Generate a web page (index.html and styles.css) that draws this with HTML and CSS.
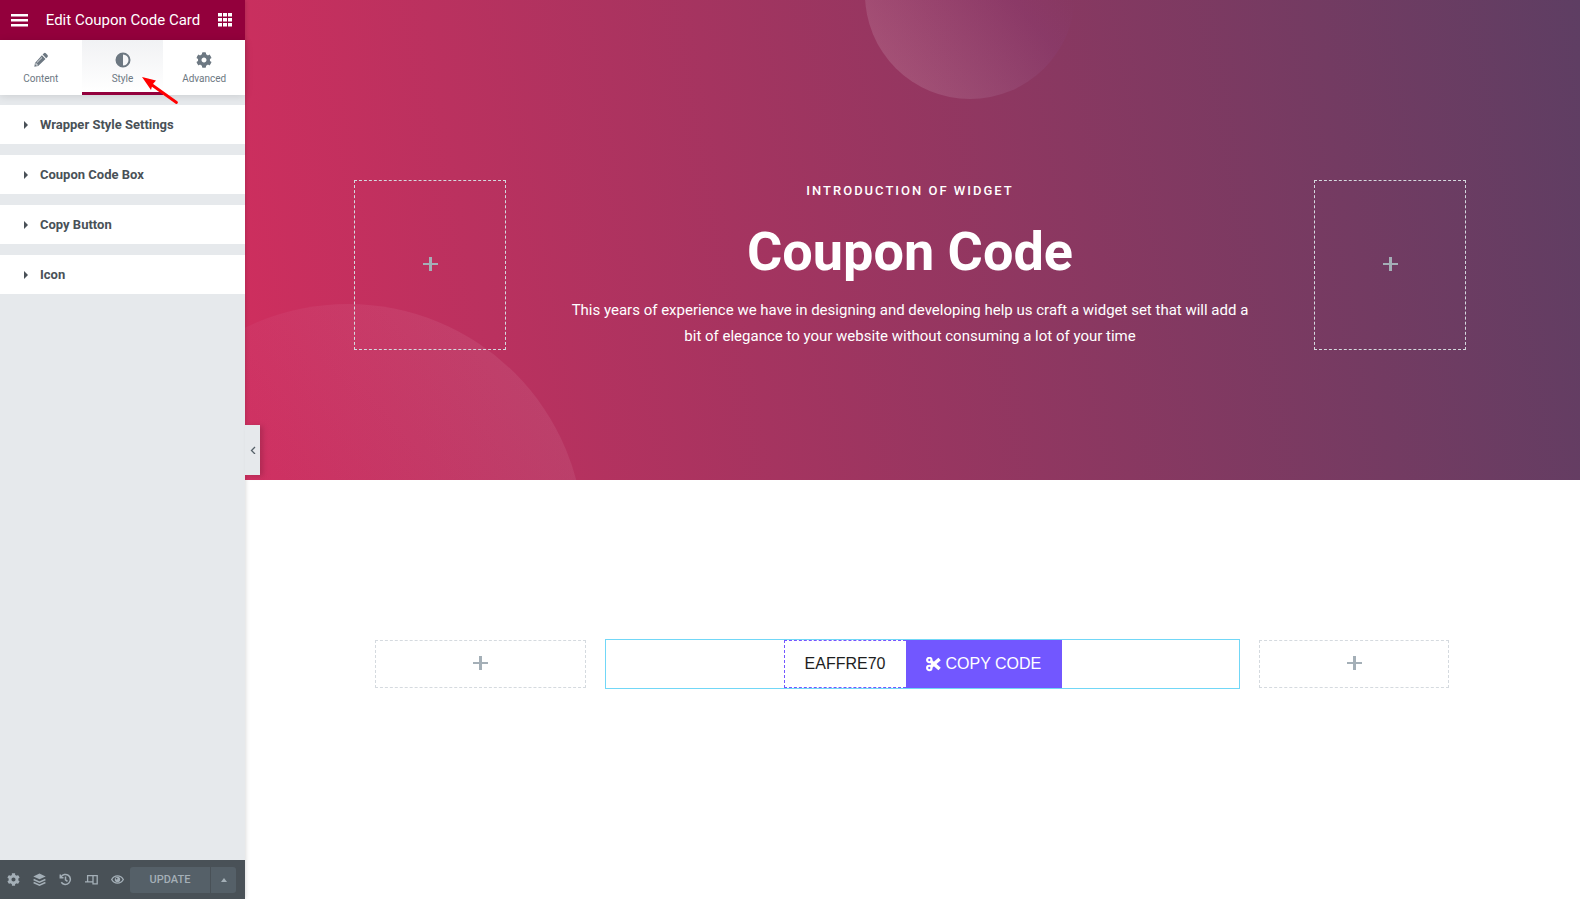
FILE: index.html
```html
<!DOCTYPE html>
<html lang="en">
<head>
  <meta charset="UTF-8">
  <meta name="viewport" content="width=device-width, initial-scale=1.0">
  <title>Edit Coupon Code Card</title>
  <link rel="stylesheet" href="styles.css">
</head>
<body>
  <aside class="panel">
    <header class="panel-header">
      <button class="header-btn" type="button" aria-label="Menu">
        <svg width="17" height="14" viewBox="0 0 17 14"><path d="M0 2.200h17M0 7.200h17M0 12.200h17" stroke="#fff" stroke-width="2.400"/></svg>
      </button>
      <h1 class="panel-title">Edit Coupon Code Card</h1>
      <button class="header-btn" type="button" aria-label="Widgets">
        <svg width="14" height="14" viewBox="0 0 14 14" fill="#fff"><path d="M0 0h4v3.500H0zM5 0h4v3.500H5zM10 0h4v3.500h-4zM0 5h4v3.500H0zM5 5h4v3.500H5zM10 5h4v3.500h-4zM0 10h4v3.500H0zM5 10h4v3.500H5zM10 10h4v3.500h-4z"/></svg>
      </button>
    </header>

    <nav class="tabs">
      <button class="tab" type="button">
        <svg width="16" height="16" viewBox="0 0 16 16" fill="#6d7882"><path d="M10.900 1.300a1.400 1.400 0 0 1 1.900 0l1.700 1.700a1.400 1.400 0 0 1 0 1.900l-1.300 1.300-3.600-3.600zM8.900 3.300l3.600 3.600-7.300 7.200-3.900.7.700-3.900z"/><path d="M9 5.500l-5.100 5.100M3 11v2h2" stroke="#fff" stroke-width=".8" fill="none"/></svg>
        <span>Content</span>
      </button>
      <button class="tab active" type="button">
        <svg width="16" height="16" viewBox="0 0 16 16"><circle cx="8" cy="8" r="6.500" fill="none" stroke="#6d7882" stroke-width="2"/><path d="M8 1.500a6.500 6.500 0 0 0 0 13z" fill="#6d7882"/></svg>
        <span>Style</span>
      </button>
      <button class="tab" type="button">
        <svg width="16" height="16" viewBox="0 0 512 512" fill="#6d7882"><path d="M487.400 315.700l-42.600-24.600c4.300-23.200 4.300-47 0-70.200l42.600-24.600c4.900-2.800 7.100-8.600 5.500-14-11.100-35.600-30-67.800-54.700-94.600-3.800-4.100-10-5.100-14.800-2.300L380.800 110c-17.900-15.400-38.500-27.300-60.800-35.100V25.800c0-5.600-3.900-10.500-9.400-11.700-36.700-8.200-74.300-7.800-109.200 0-5.500 1.200-9.400 6.100-9.400 11.700V75c-22.200 7.900-42.800 19.800-60.800 35.100L88.700 85.500c-4.900-2.800-11-1.900-14.800 2.300-24.700 26.700-43.600 58.900-54.700 94.600-1.700 5.400.6 11.200 5.500 14L67.300 221c-4.300 23.200-4.300 47 0 70.200l-42.600 24.600c-4.900 2.800-7.100 8.600-5.500 14 11.100 35.600 30 67.800 54.700 94.600 3.800 4.100 10 5.100 14.800 2.300l42.600-24.600c17.900 15.400 38.500 27.300 60.800 35.100v49.200c0 5.600 3.900 10.500 9.400 11.700 36.700 8.200 74.300 7.800 109.200 0 5.500-1.200 9.400-6.100 9.400-11.700v-49.200c22.200-7.900 42.800-19.800 60.800-35.100l42.600 24.600c4.900 2.800 11 1.900 14.800-2.300 24.700-26.700 43.600-58.900 54.700-94.600 1.500-5.500-.7-11.300-5.600-14.100zM256 336c-44.100 0-80-35.900-80-80s35.900-80 80-80 80 35.900 80 80-35.900 80-80 80z"/></svg>
        <span>Advanced</span>
      </button>
      <svg class="pointer" width="40" height="32" viewBox="0 0 40 32"><path d="M34.500 26.500L10 9" stroke="#f00" stroke-width="2.800" stroke-linecap="round"/><path d="M0 1l14 3.500-3.500 4-1.500 5.500z" fill="#f00"/></svg>
    </nav>

    <div class="sections">
      <button class="section" type="button"><span class="caret"></span>Wrapper Style Settings</button>
      <button class="section" type="button"><span class="caret"></span>Coupon Code Box</button>
      <button class="section" type="button"><span class="caret"></span>Copy Button</button>
      <button class="section" type="button"><span class="caret"></span>Icon</button>
    </div>

    <footer class="panel-footer">
      <button class="tool" type="button" aria-label="Settings">
        <svg width="13" height="13" viewBox="0 0 512 512" fill="#a4afb7"><path d="M487.400 315.700l-42.600-24.600c4.300-23.200 4.300-47 0-70.200l42.600-24.600c4.900-2.800 7.100-8.600 5.500-14-11.100-35.600-30-67.800-54.700-94.600-3.800-4.100-10-5.100-14.800-2.300L380.800 110c-17.900-15.400-38.500-27.300-60.800-35.100V25.800c0-5.600-3.900-10.500-9.400-11.700-36.700-8.200-74.300-7.800-109.200 0-5.500 1.200-9.400 6.100-9.400 11.700V75c-22.200 7.900-42.800 19.800-60.800 35.100L88.700 85.500c-4.900-2.800-11-1.900-14.800 2.300-24.700 26.700-43.600 58.900-54.700 94.600-1.700 5.400.6 11.200 5.500 14L67.300 221c-4.300 23.200-4.300 47 0 70.200l-42.600 24.600c-4.900 2.800-7.100 8.600-5.500 14 11.100 35.600 30 67.800 54.700 94.600 3.800 4.100 10 5.100 14.800 2.300l42.600-24.600c17.900 15.400 38.500 27.300 60.800 35.100v49.200c0 5.600 3.900 10.500 9.400 11.700 36.700 8.200 74.300 7.800 109.200 0 5.500-1.200 9.400-6.100 9.400-11.700v-49.200c22.200-7.900 42.800-19.800 60.800-35.100l42.600 24.600c4.900 2.800 11 1.900 14.800-2.300 24.700-26.700 43.600-58.900 54.700-94.600 1.500-5.500-.7-11.300-5.600-14.100zM256 336c-44.100 0-80-35.900-80-80s35.900-80 80-80 80 35.900 80 80-35.900 80-80 80z"/></svg>
      </button>
      <button class="tool" type="button" aria-label="Navigator">
        <svg width="13" height="13" viewBox="0 0 13 13" fill="#a4afb7"><path d="M6.500.5l6.200 2.900-6.200 2.900L.3 3.400z"/><path d="M.6 6.500l5.900 2.700 5.900-2.700M.6 9.500l5.900 2.700 5.900-2.700" fill="none" stroke="#a4afb7" stroke-width="1.500"/></svg>
      </button>
      <button class="tool" type="button" aria-label="History">
        <svg width="13" height="13" viewBox="0 0 13 13" fill="none" stroke="#a4afb7" stroke-width="1.500"><path d="M2 4a5 5 0 1 1 .3 5.300M1.300 1.500v3.200h3.200M6.500 3.600v3.200l2 1.500"/></svg>
      </button>
      <button class="tool" type="button" aria-label="Responsive mode">
        <svg width="13" height="13" viewBox="0 0 13 13" fill="none" stroke="#a4afb7" stroke-width="1.300"><path d="M2.600 8.500V2.600h5.800M0 8.900h7.500M8 2.600h4.200v8.300H8z"/></svg>
      </button>
      <button class="tool" type="button" aria-label="Preview">
        <svg width="13" height="13" viewBox="0 0 13 13"><path d="M.7 6.500C3.400 1.700 9.600 1.700 12.300 6.500 9.600 11.300 3.400 11.300.7 6.500z" fill="none" stroke="#a4afb7" stroke-width="1.400"/><circle cx="6.500" cy="6.500" r="2.700" fill="#a4afb7"/><circle cx="5.600" cy="5.600" r=".9" fill="#495157"/></svg>
      </button>
      <div class="publish">
        <button class="update" type="button">UPDATE</button>
        <button class="update-more" type="button" aria-label="Save options"><span class="caret-up"></span></button>
      </div>
    </footer>

    <button class="collapse" type="button" aria-label="Hide panel">
      <svg width="6" height="8" viewBox="0 0 6 8"><path d="M5 1L1.500 4.500 5 8" fill="none" stroke="#556068" stroke-width="1.300"/></svg>
    </button>
  </aside>

  <main class="preview">
    <section class="hero">
      <div class="shape shape-top"></div>
      <div class="shape shape-bottom"></div>
      <button class="drop-zone" type="button" aria-label="Add widget"><span class="plus"></span></button>
      <div class="hero-text">
        <p class="eyebrow">INTRODUCTION OF WIDGET</p>
        <h2 class="hero-title">Coupon Code</h2>
        <p class="hero-desc">This years of experience we have in designing and developing help us craft a widget set that will add a bit of elegance to your website without consuming a lot of your time</p>
      </div>
      <button class="drop-zone" type="button" aria-label="Add widget"><span class="plus"></span></button>
    </section>

    <section class="coupon-row">
      <button class="drop-zone light" type="button" aria-label="Add widget"><span class="plus"></span></button>
      <div class="coupon-widget">
        <span class="coupon-code">EAFFRE70</span>
        <button class="copy-btn" type="button">
          <svg width="15" height="15" viewBox="0 0 15 15"><path d="M4.500 4L13.600 12M4.500 10L13.600 2" stroke="#fff" stroke-width="3.600"/><circle cx="3.300" cy="3" r="2.200" fill="none" stroke="#fff" stroke-width="2.100"/><circle cx="3.300" cy="11" r="2.200" fill="none" stroke="#fff" stroke-width="2.100"/></svg>
          COPY CODE
        </button>
      </div>
      <button class="drop-zone light" type="button" aria-label="Add widget"><span class="plus"></span></button>
    </section>
  </main>
</body>
</html>
```
FILE: styles.css
```css
* {
  margin: 0;
  padding: 0;
  box-sizing: border-box;
}

body {
  display: flex;
  min-height: 100vh;
  font-family: Roboto, "Liberation Sans", sans-serif;
  background: #fff;
}

button {
  font-family: inherit;
  border: 0;
  background: none;
  cursor: pointer;
}

svg {
  display: block;
}

/* Panel */
.panel {
  position: relative;
  z-index: 1;
  display: flex;
  flex-direction: column;
  flex: 0 0 245px;
  background: #e6e9ec;
  box-shadow: 0 0 5px rgba(0, 0, 0, 0.2);
}

.panel-header {
  display: flex;
  align-items: center;
  justify-content: space-between;
  height: 40px;
  padding: 0 13px 0 11px;
  background: #93003c;
}

.header-btn {
  display: flex;
}

.panel-title {
  color: #fff;
  font-size: 15px;
  font-weight: 400;
}

.tabs {
  position: relative;
  display: flex;
  height: 55px;
  background: #fff;
  box-shadow: 0 1px 8px rgba(0, 0, 0, 0.12);
}

.tab {
  flex: 1;
  display: flex;
  flex-direction: column;
  align-items: center;
  gap: 4px;
  padding-top: 12px;
  color: #6d7882;
  font-size: 10px;
  line-height: 14px;
  border-bottom: 3px solid transparent;
}

.tab.active {
  background: linear-gradient(#f1f2f4, #fff);
  border-bottom-color: #93003c;
}

.pointer {
  position: absolute;
  left: 142px;
  top: 36px;
}

.sections {
  flex: 1;
  display: flex;
  flex-direction: column;
  gap: 11px;
  padding-top: 10px;
}

.section {
  display: flex;
  align-items: center;
  gap: 12px;
  height: 39px;
  padding-left: 24px;
  background: #fff;
  color: #495157;
  font-size: 13px;
  font-weight: 700;
}

.caret {
  border-left: 4px solid #495157;
  border-top: 4px solid transparent;
  border-bottom: 4px solid transparent;
}

.panel-footer {
  display: flex;
  align-items: center;
  height: 39px;
  background: #495157;
}

.tool {
  display: flex;
  justify-content: center;
  width: 26px;
}

.publish {
  display: flex;
  gap: 1px;
  height: 26px;
}

.update,
.update-more {
  background: #556068;
  color: #a4afb7;
  font-size: 11px;
  font-weight: 500;
}

.update {
  width: 80px;
  border-radius: 3px 0 0 3px;
}

.update-more {
  display: flex;
  align-items: center;
  justify-content: center;
  width: 25px;
  border-radius: 0 3px 3px 0;
}

.caret-up {
  border-bottom: 4px solid #a4afb7;
  border-left: 3px solid transparent;
  border-right: 3px solid transparent;
}

.collapse {
  position: absolute;
  left: 100%;
  top: calc(50% - 25px);
  display: flex;
  align-items: center;
  justify-content: center;
  width: 15px;
  height: 50px;
  background: #e6e9ec;
  box-shadow: 3px 1px 5px rgba(0, 0, 0, 0.15);
}

/* Preview */
.preview {
  flex: 1;
  min-width: 0;
}

.hero {
  position: relative;
  display: flex;
  justify-content: space-between;
  padding: 180px 114px 130px 109px;
  overflow: hidden;
  background: linear-gradient(80deg, #d02e5e 0%, #5e3e63 100%);
  color: #fff;
  text-align: center;
}

.shape {
  position: absolute;
  border-radius: 50%;
}

.shape-top {
  left: 620px;
  top: -111px;
  width: 210px;
  height: 210px;
  background: linear-gradient(50deg, rgba(255, 255, 255, 0.14) 10%, rgba(140, 70, 140, 0.14) 60%, rgba(130, 60, 110, 0.02) 75%);
}

.shape-bottom {
  left: -133px;
  top: 304px;
  width: 472px;
  height: 472px;
  background: linear-gradient(50deg, rgba(200, 50, 110, 0.15) 40%, rgba(255, 255, 255, 0.08) 90%);
}

.drop-zone {
  position: relative;
  display: flex;
  align-items: center;
  justify-content: center;
  width: 152px;
  border: 1px dashed #d5dadf;
}

.plus {
  width: 15px;
  height: 14px;
  margin-bottom: 2px;
  background:
    linear-gradient(#a4afb7, #a4afb7) center / 15px 2px no-repeat,
    linear-gradient(#a4afb7, #a4afb7) center / 3px 14px no-repeat;
}

.hero-text {
  position: relative;
  width: 690px;
}

.eyebrow {
  font-size: 13px;
  font-weight: 500;
  line-height: 22px;
  letter-spacing: 2px;
}

.hero-title {
  margin: 16px 0 12px;
  font-size: 54px;
  font-weight: 700;
  line-height: 67px;
}

.hero-desc {
  margin-bottom: 1px;
  font-size: 15px;
  line-height: 26px;
}

.coupon-row {
  display: flex;
  gap: 19px;
  padding: 159px 131px 0 130px;
}

.coupon-row .drop-zone:first-child {
  flex: 211;
}

.coupon-row .drop-zone:last-child {
  flex: 189;
}

.drop-zone.light {
  height: 48px;
  margin-top: 1px;
}

.coupon-widget {
  flex: 638;
  display: flex;
  justify-content: center;
  height: 50px;
  border: 1px solid #71d7f7;
  font-family: "Liberation Sans", Arial, sans-serif;
  font-size: 16px;
}

.coupon-code {
  padding: 0 20px;
  border: 1px dashed #7257ff;
  border-right: 0;
  color: #1e1e1e;
  line-height: 46px;
}

.copy-btn {
  display: flex;
  align-items: center;
  gap: 5px;
  padding: 0 21px 0 20px;
  background: #7257ff;
  color: #fff;
  font-size: 16px;
}
```
